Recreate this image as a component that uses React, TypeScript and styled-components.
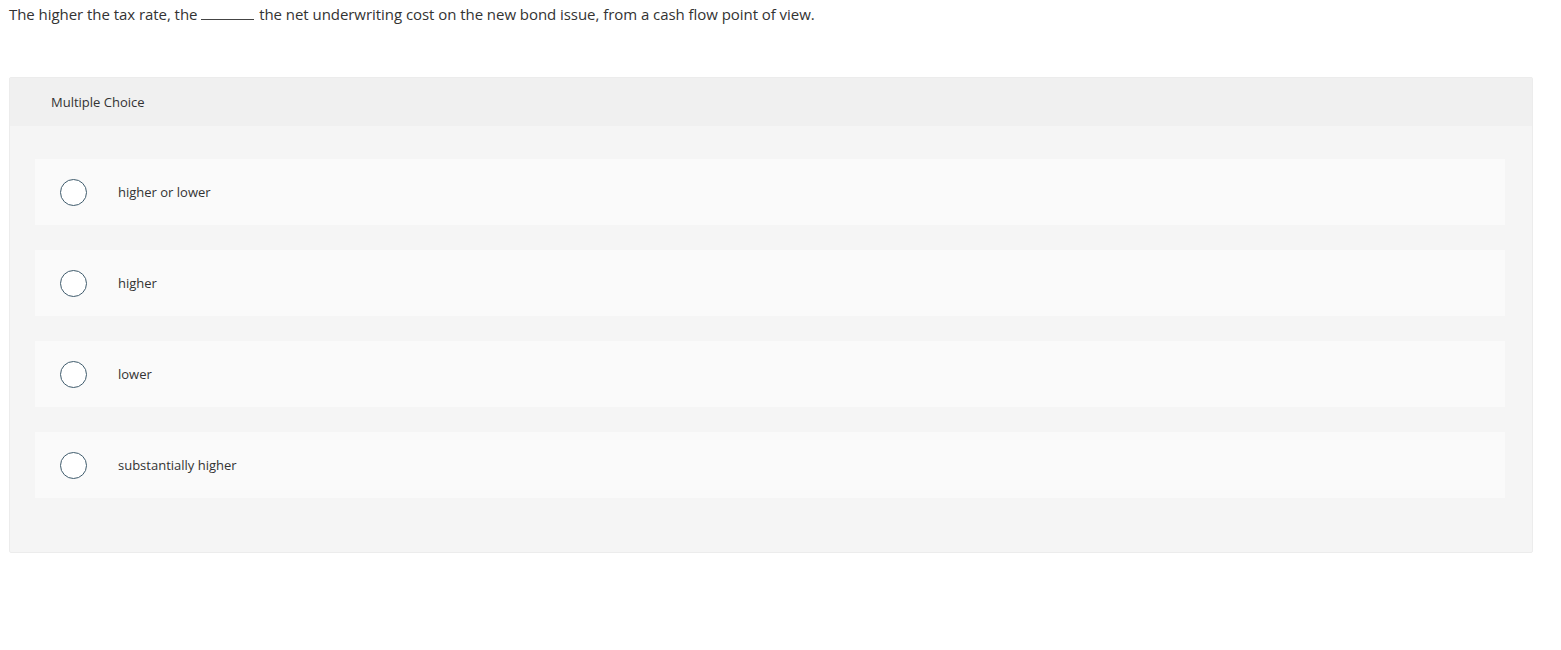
import React from "react";
import styled, { createGlobalStyle } from "styled-components";

const Global = createGlobalStyle`
  html, body { margin: 0; padding: 0; background: #fff; }
  body { font-family: "Open Sans", "Liberation Sans", sans-serif; color: #333; }
`;

const Page = styled.div`
  padding: 4px 28px 0 9px;
`;

const Question = styled.p`
  margin: 0;
  font-size: 15px;
  line-height: 21px;
  color: #333;
  letter-spacing: -0.05px;
`;

const Blank = styled.span`
  display: inline-block;
  width: 53px;
  border-bottom: 1px solid #444;
  margin: 0 1px 0 0;
  vertical-align: baseline;
  height: 14px;
`;

const Panel = styled.section`
  margin-top: 52px;
  background: #f5f5f5;
  border: 1px solid #ececec;
  border-radius: 2px;
`;

const Header = styled.div`
  background: #f0f0f0;
  height: 48px;
  display: flex;
  align-items: center;
  padding-left: 41px;
  font-size: 13px;
  color: #333;
`;

const Options = styled.div`
  display: flex;
  flex-direction: column;
  gap: 25px;
  padding: 33px 27px 54px 25px;
`;

const Option = styled.label`
  display: flex;
  align-items: center;
  height: 66px;
  background: #fafafa;
  padding-left: 25px;
  font-size: 13px;
  color: #333;
  cursor: pointer;
`;

const Radio = styled.span`
  box-sizing: border-box;
  width: 27px;
  height: 27px;
  border: 1.5px solid #3f5b6c;
  border-radius: 50%;
  background: #fff;
  flex-shrink: 0;
  margin-right: 31px;
`;

const choices = ["higher or lower", "higher", "lower", "substantially higher"];

export default function App() {
  return (
    <>
      <Global />
      <Page>
        <Question>
          The higher the tax rate, the{" "}<Blank />{" "}the net underwriting cost on the new bond issue, from a cash flow point of view.
        </Question>
        <Panel>
          <Header>Multiple Choice</Header>
          <Options>
            {choices.map((c) => (
              <Option key={c}>
                <Radio />
                {c}
              </Option>
            ))}
          </Options>
        </Panel>
      </Page>
    </>
  );
}
